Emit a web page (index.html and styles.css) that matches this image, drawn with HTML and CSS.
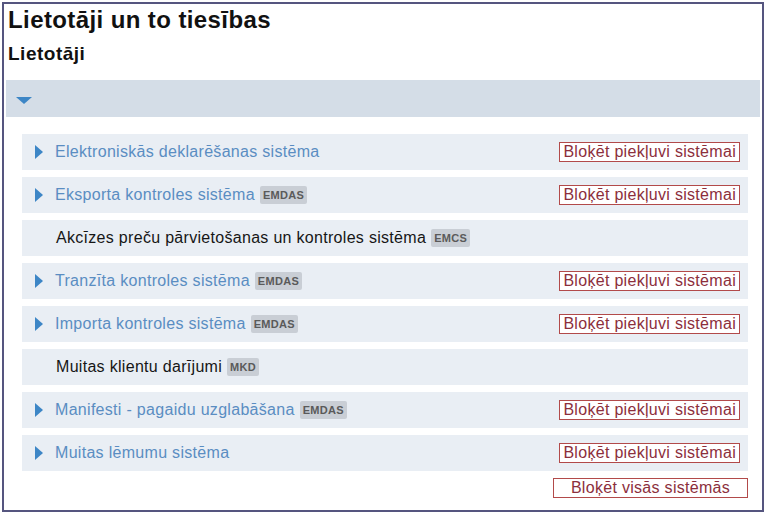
FILE: index.html
```html
<!DOCTYPE html>
<html lang="lv">
<head>
    <meta charset="UTF-8">
    <title>Lietotāji un to tiesības</title>
    <link rel="stylesheet" href="styles.css">
</head>
<body>
    <div class="frame">
        <h1>Lietotāji un to tiesības</h1>
        <h2>Lietotāji</h2>

        <div class="group-bar">
            <span class="caret-down"></span>
        </div>

        <div class="systems">
            <div class="system-row">
                <span class="caret-right"></span>
                <a class="system-name">Elektroniskās deklarēšanas sistēma</a>
                <button class="block-btn">Bloķēt piekļuvi sistēmai</button>
            </div>
            <div class="system-row">
                <span class="caret-right"></span>
                <a class="system-name">Eksporta kontroles sistēma</a>
                <span class="badge">EMDAS</span>
                <button class="block-btn">Bloķēt piekļuvi sistēmai</button>
            </div>
            <div class="system-row plain">
                <span class="system-name">Akcīzes preču pārvietošanas un kontroles sistēma</span>
                <span class="badge">EMCS</span>
            </div>
            <div class="system-row">
                <span class="caret-right"></span>
                <a class="system-name">Tranzīta kontroles sistēma</a>
                <span class="badge">EMDAS</span>
                <button class="block-btn">Bloķēt piekļuvi sistēmai</button>
            </div>
            <div class="system-row">
                <span class="caret-right"></span>
                <a class="system-name">Importa kontroles sistēma</a>
                <span class="badge">EMDAS</span>
                <button class="block-btn">Bloķēt piekļuvi sistēmai</button>
            </div>
            <div class="system-row plain">
                <span class="system-name">Muitas klientu darījumi</span>
                <span class="badge">MKD</span>
            </div>
            <div class="system-row">
                <span class="caret-right"></span>
                <a class="system-name">Manifesti - pagaidu uzglabāšana</a>
                <span class="badge">EMDAS</span>
                <button class="block-btn">Bloķēt piekļuvi sistēmai</button>
            </div>
            <div class="system-row">
                <span class="caret-right"></span>
                <a class="system-name">Muitas lēmumu sistēma</a>
                <button class="block-btn">Bloķēt piekļuvi sistēmai</button>
            </div>
        </div>

        <div class="footer">
            <button class="block-btn wide">Bloķēt visās sistēmās</button>
        </div>
    </div>
</body>
</html>
```

FILE: styles.css
```css
body {
    margin: 0;
    padding: 2px 4px 2px 2px;
    font-family: Arial, "Liberation Sans", sans-serif;
    background-color: #fff;
}

.frame {
    border: 2px solid #55557f;
    height: 510px;
    box-sizing: border-box;
    padding: 2px 2px 0 2px;
}

h1 {
    margin: 0 0 0 2px;
    font-size: 24px;
    letter-spacing: 0.4px;
    line-height: 28px;
    color: #111;
}

h2 {
    margin: 8px 0 0 2px;
    font-size: 19px;
    letter-spacing: 0.5px;
    line-height: 24px;
    color: #111;
}

.group-bar {
    margin-top: 14px;
    height: 37px;
    background-color: #d4dde7;
    display: flex;
    align-items: center;
    padding-left: 10px;
}

.caret-down {
    width: 0;
    height: 0;
    border-left: 8px solid transparent;
    border-right: 8px solid transparent;
    border-top: 7px solid #3d86c6;
    margin-top: 3px;
}

.systems {
    display: flex;
    flex-direction: column;
    gap: 7px;
    margin: 17px 12px 0 16px;
}

.system-row {
    display: flex;
    align-items: center;
    height: 36px;
    background-color: #e9eef4;
    padding: 0 8px 0 13px;
}

.system-row.plain {
    padding-left: 34px;
}

.caret-right {
    width: 0;
    height: 0;
    border-top: 7px solid transparent;
    border-bottom: 7px solid transparent;
    border-left: 8px solid #3d86c6;
    margin-right: 12px;
}

.system-name {
    font-size: 16px;
    letter-spacing: 0.3px;
    color: #5a8dc2;
}

.plain .system-name {
    color: #161616;
}

.badge {
    margin-left: 5px;
    background-color: #c9ced5;
    color: #5a5a5a;
    font-size: 11px;
    font-weight: bold;
    letter-spacing: 0.3px;
    padding: 3px 3px;
    border-radius: 2px;
}

.block-btn {
    margin-left: auto;
    font-family: Arial, "Liberation Sans", sans-serif;
    font-size: 16px;
    letter-spacing: 0.3px;
    color: #8c2f3c;
    background-color: #fff;
    border: 1px solid #b24a4a;
    border-radius: 0;
    padding: 0 3px;
    line-height: 18px;
}

.footer {
    display: flex;
    justify-content: flex-end;
    margin: 7px 12px 0 0;
}

.block-btn.wide {
    width: 195px;
    text-align: center;
}
```
